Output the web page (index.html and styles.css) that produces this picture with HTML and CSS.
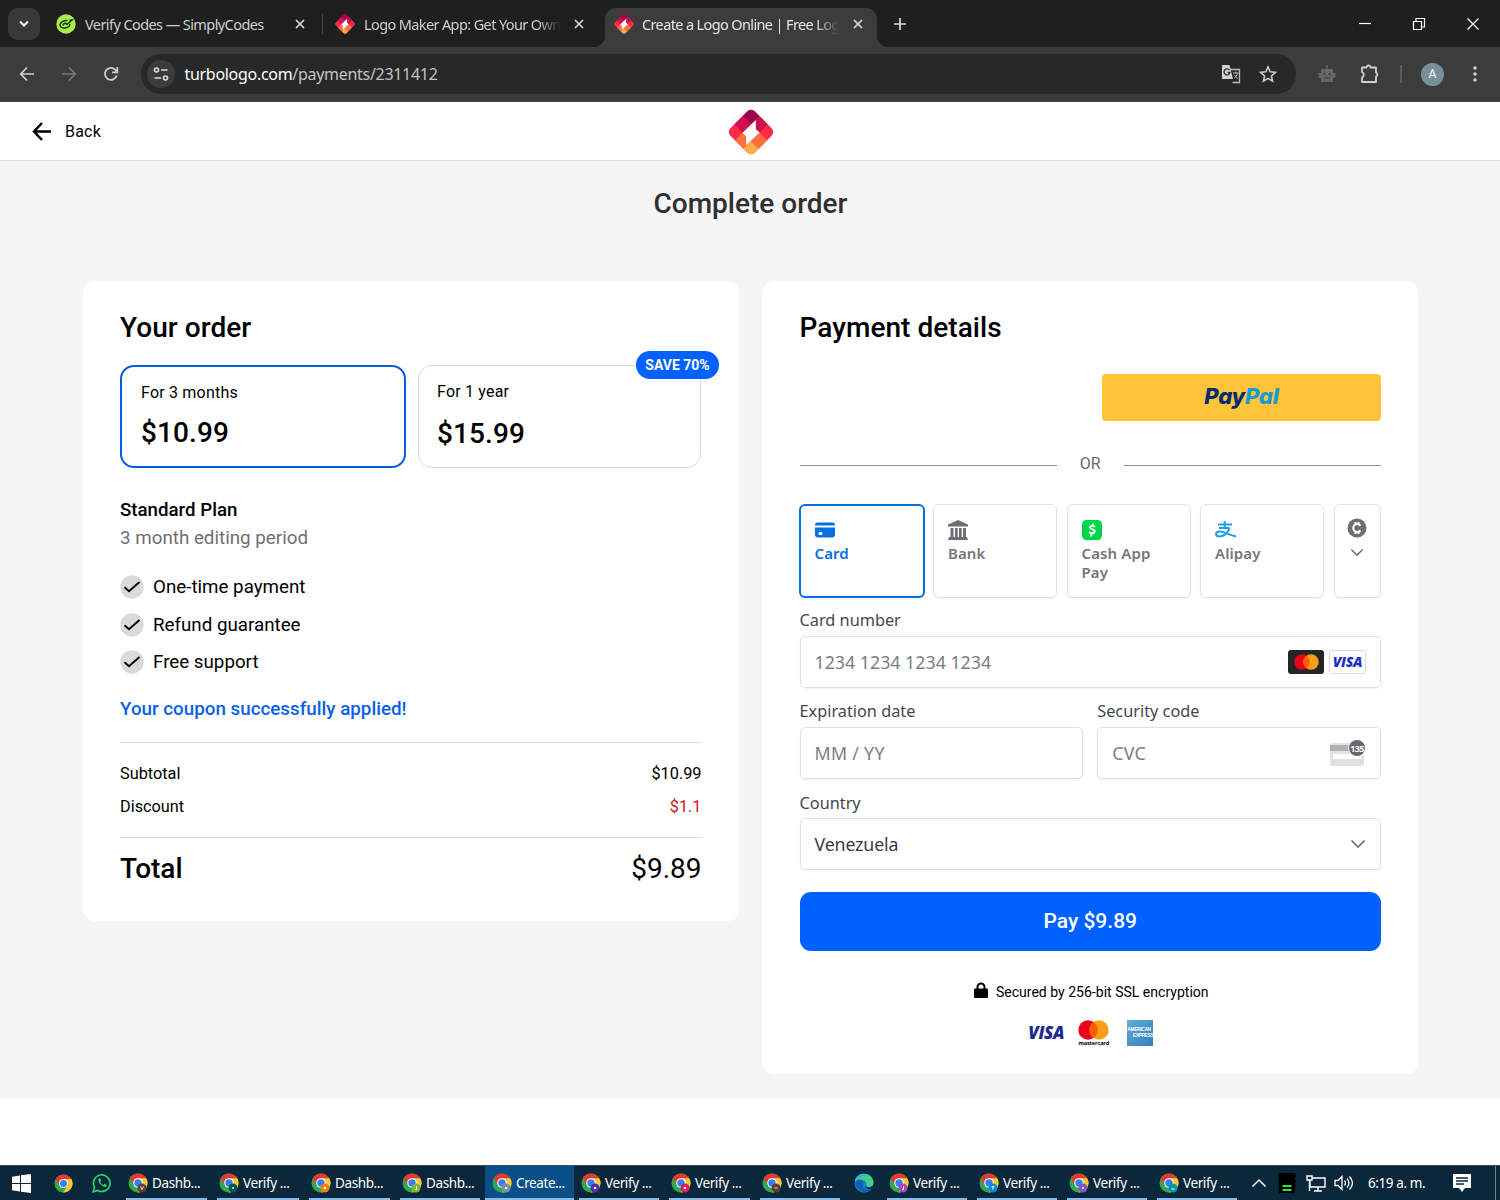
FILE: index.html
```html
<!DOCTYPE html>
<html lang="en">
<head>
  <meta charset="UTF-8">
  <meta name="viewport" content="width=device-width, initial-scale=1.0">
  <title>Create a Logo Online | Free Logo Maker</title>
  <link rel="stylesheet" href="styles.css">
</head>
<body>
  <!-- shared shapes -->
  <svg class="defs" width="0" height="0">
    <symbol id="logo" viewBox="1.700 1.700 42.600 42.600">
      <clipPath id="logoclip"><rect x="7" y="7" width="32" height="32" rx="5" transform="rotate(45 23 23)"/></clipPath>
      <g clip-path="url(#logoclip)">
        <g transform="rotate(45 23 23)">
          <rect x="6" y="6" width="34" height="34" fill="#ff2a48"/>
          <rect x="6" y="6" width="12" height="12" fill="#9c0052"/>
          <rect x="18" y="6" width="11" height="12" fill="#d0104c"/>
          <rect x="6" y="18" width="12" height="11" fill="#d0104c"/>
          <rect x="18" y="29" width="11" height="11" fill="#ff7040"/>
          <rect x="29" y="18" width="11" height="11" fill="#ff7040"/>
          <rect x="29" y="29" width="11" height="11" fill="#ffac42"/>
        </g>
      </g>
      <path d="M27.500 12v8.500l3.500 3L18.500 35.500V27L15 24z" fill="#fff"/>
    </symbol>
    <symbol id="chrome" viewBox="0 0 20 20">
      <circle cx="10" cy="10" r="9.500" fill="#2da94f"/>
      <path d="M10 10L1.800 5.200A9.500 9.500 0 0 1 18.200 5.200z" fill="#e33b2e"/>
      <path d="M10 5.200h8.200A9.500 9.500 0 0 1 9.700 19.500l4.500-7.200z" fill="#fcc934"/>
      <path d="M1.800 5.200L5.900 12.400 10 10 9 4.800z" fill="#e33b2e"/>
      <circle cx="10" cy="10" r="4.800" fill="#fff"/>
      <circle cx="10" cy="10" r="3.700" fill="#3b7ded"/>
    </symbol>
    <symbol id="close" viewBox="0 0 12 12"><path d="M2 2l8 8M10 2l-8 8" stroke="#dedede" stroke-width="1.600"/></symbol>
    <symbol id="check" viewBox="0 0 24 24">
      <circle cx="12" cy="12" r="11.700" fill="#dadada"/>
      <path d="M4.500 12.200l4.500 4L19.500 7" fill="none" stroke="#000" stroke-width="1.900"/>
    </symbol>
    <symbol id="chevron" viewBox="0 0 16 10"><path d="M1.500 1.500L8 8l6.500-6.500" fill="none" stroke="#6d6e78" stroke-width="1.700"/></symbol>
  </svg>

  <div class="tabstrip">
    <div class="tabsearch"><svg width="12" height="8"><path d="M2 1.500l4 4 4-4" fill="none" stroke="#eee" stroke-width="2"/></svg></div>
    <div class="tab first">
      <svg width="20" height="20" viewBox="0 0 20 20"><circle cx="10" cy="10" r="9.700" fill="#a5f04a"/><path d="M11.500 6.500C8 6 4 8.500 4 11s3 3.500 6 2.800 4-2.300 3.700-3.800M7 11.500c0-1.500 2-2.500 3-2l1 1L16 6l-2.500.3" fill="none" stroke="#18330c" stroke-width="1.500"/></svg>
      <span class="tabtitle t1">Verify Codes — SimplyCodes</span>
      <svg class="x" width="12" height="12"><use href="#close"/></svg>
    </div>
    <div class="tab second">
      <svg width="20" height="20"><use href="#logo"/></svg>
      <span class="tabtitle fade t2">Logo Maker App: Get Your Own</span>
      <svg class="x" width="12" height="12"><use href="#close"/></svg>
    </div>
    <div class="tab active">
      <svg width="20" height="20"><use href="#logo"/></svg>
      <span class="tabtitle fade t3">Create a Logo Online | Free Log</span>
      <svg class="x" width="12" height="12"><use href="#close"/></svg>
    </div>
    <svg class="newtab" width="14" height="14"><path d="M7 1v12M1 7h12" stroke="#ddd" stroke-width="1.700"/></svg>
    <div class="winbuttons">
      <svg width="14" height="14"><path d="M1 6.500h12" stroke="#fff" stroke-width="1.200"/></svg>
      <svg width="14" height="14"><path d="M1.500 4.500h8v8h-8zM4 4.500v-3h8.500v8.500H9.500" fill="none" stroke="#fff" stroke-width="1.200"/></svg>
      <svg width="14" height="14"><path d="M1.500 1.500l11 11M12.500 1.500l-11 11" stroke="#fff" stroke-width="1.300"/></svg>
    </div>
  </div>

  <div class="toolbar">
    <svg width="16" height="16"><path d="M15 8H2M8 1.500L1.700 8 8 14.500" fill="none" stroke="#d0d0d0" stroke-width="1.700"/></svg>
    <svg width="16" height="16"><path d="M1 8h13M8 1.500L14.300 8 8 14.500" fill="none" stroke="#777" stroke-width="1.700"/></svg>
    <svg width="16" height="16"><path d="M13.700 9.500A6 6 0 1 1 12.500 4l1.500 1.700M14.300 1v5.300H9" fill="none" stroke="#d0d0d0" stroke-width="1.800"/></svg>
    <div class="omnibox">
      <div class="siteinfo"><svg width="16" height="14"><g fill="none" stroke="#ddd" stroke-width="1.600"><circle cx="3.500" cy="3" r="2"/><path d="M8 3h6.500M1.500 11H8"/><circle cx="12.500" cy="11" r="2"/></g></svg></div>
      <span class="url"><b>turbologo.com</b>/payments/2311412</span>
      <svg class="translate" width="20" height="20"><path d="M8.500 5.500h10v13h-7" fill="none" stroke="#bbb" stroke-width="1.300"/><path d="M1 1h7.500l3.500 14H1z" fill="#d0d0d0"/><path d="M8.500 6.200A3 3 0 1 0 9 8.500H6.500" fill="none" stroke="#333" stroke-width="1.300"/><path d="M12 9h5.500M14.700 7.500V9M16.500 9c-.5 3-2 4-3 5M13.500 11l3 4" stroke="#bbb" fill="none"/></svg>
      <svg width="18" height="18"><path d="M9 1.800l2.100 5 5.400.5-4.100 3.600 1.200 5.300L9 13.400l-4.600 2.800 1.200-5.300-4.100-3.600 5.400-.5z" fill="none" stroke="#d0d0d0" stroke-width="1.500"/></svg>
    </div>
    <svg class="robot" width="20" height="20"><path d="M9.300 1h1.400v4H15q1 0 1 1v3h2.500v5H16v4H4v-4H1.500V9H4V6q0-1 1-1h4.300z" fill="#666"/><circle cx="7.500" cy="10" r="1" fill="#3c3c3c"/><circle cx="12.500" cy="10" r="1" fill="#3c3c3c"/><path d="M7 14h6" stroke="#3c3c3c"/></svg>
    <svg class="puzzle" width="20" height="20"><path d="M2 3.500h4.500a2 2 0 0 1 4 0H16v5.200a2 2 0 0 1 0 3.800V18H2v-4.500a3 3 0 0 0 0-5.500z" fill="none" stroke="#d0d0d0" stroke-width="1.800" stroke-linejoin="round"/></svg>
    <div class="vline"></div>
    <div class="avatar">A</div>
    <svg class="dots" width="4" height="18"><g fill="#d0d0d0"><circle cx="2" cy="3" r="1.800"/><circle cx="2" cy="9" r="1.800"/><circle cx="2" cy="15" r="1.800"/></g></svg>
  </div>

  <header>
    <a class="back"><svg width="20" height="20"><path d="M19 10.500H2.500M10 2L2 10.500l8 8.500" fill="none" stroke="#000" stroke-width="2.500"/></svg>Back</a>
    <svg class="brand" width="46" height="46"><use href="#logo"/></svg>
  </header>

  <main>
    <h1>Complete order</h1>
    <div class="columns">
      <section class="card order">
        <h2 class="h-order">Your order</h2>
        <div class="options">
          <div class="option selected"><p>For 3 months</p><strong>$10.99</strong></div>
          <div class="option"><p class="year">For 1 year</p><strong>$15.99</strong><span class="badge">SAVE 70%</span></div>
        </div>
        <h3>Standard Plan</h3>
        <p class="period">3 month editing period</p>
        <ul>
          <li><svg width="24" height="24"><use href="#check"/></svg>One-time payment</li>
          <li><svg width="24" height="24"><use href="#check"/></svg>Refund guarantee</li>
          <li><svg width="24" height="24"><use href="#check"/></svg>Free support</li>
        </ul>
        <p class="coupon">Your coupon successfully applied!</p>
        <div class="sums">
          <div class="row"><span>Subtotal</span><span>$10.99</span></div>
          <div class="row"><span>Discount</span><span class="red">$1.1</span></div>
        </div>
        <div class="total"><b>Total</b><span>$9.89</span></div>
      </section>

      <section class="card payment">
        <h2 class="h-pay">Payment details</h2>
        <div class="paypal"><span>Pay</span><em>Pal</em></div>
        <div class="or">OR</div>
        <div class="methods">
          <div class="method on">
            <svg width="20" height="20"><path d="M0 5.500Q0 2.500 2.500 2.500h15Q20 2.500 20 5.500z" fill="#0570de"/><path d="M0 7.500h20v7q0 3-3 3H3q-3 0-3-3z" fill="#0570de"/><rect x="3.500" y="12" width="4" height="3" rx="1.500" fill="#fff"/></svg>
            <span>Card</span>
          </div>
          <div class="method">
            <svg width="20" height="20"><path d="M10 0l10 4.500v2H0v-2zM2.500 8h3v9h-3zM7 8h2.700v9H7zM11 8h2.700v9H11zM15 8h3v9h-3zM1 17h18l1 3H0z" fill="#6d6e78"/></svg>
            <span>Bank</span>
          </div>
          <div class="method">
            <svg width="20" height="20"><rect width="20" height="20" rx="4.500" fill="#00d64b"/><path d="M13 6.800c-1.200-1.300-5-1.500-5 .8s5 1.300 4.700 3.800-4.200 2.200-5.500.6M11 3.500l-.5 2M9.500 14l-.5 2.500" fill="none" stroke="#fff" stroke-width="1.900"/></svg>
            <span>Cash App Pay</span>
          </div>
          <div class="method">
            <svg class="alipay" width="22" height="20"><path d="M3 4.500h14M4 8h10.500M9.700 1v7M14.500 8C13 13 8.500 16.500 4.500 16.500c-4.500 0-4.500-5 0-5 5 0 9 3.500 16.500 5" fill="none" stroke="#1c9fe5" stroke-width="2"/></svg>
            <span>Alipay</span>
          </div>
          <div class="method more">
            <svg width="20" height="20"><circle cx="10" cy="10" r="9.500" fill="#6d6e78"/><path d="M13.500 7.700a4 4 0 1 0 0 4.600M8.500 4v2M11.500 4v2M8.500 14v2M11.500 14v2" fill="none" stroke="#fff" stroke-width="2"/></svg>
            <svg width="14" height="9"><use href="#chevron"/></svg>
          </div>
        </div>

        <label class="l-card">Card number</label>
        <div class="input"><span class="ph-card">1234 1234 1234 1234</span>
          <div class="brands">
            <svg width="36" height="24"><rect width="36" height="24" rx="3" fill="#252525"/><circle cx="14" cy="12" r="7.700" fill="#eb001b"/><circle cx="23" cy="12" r="7.700" fill="#f79e1b"/><path d="M18.500 5.700a7.700 7.700 0 0 1 0 12.600 7.700 7.700 0 0 1 0-12.600z" fill="#ff5f00"/></svg>
            <span class="visa boxed">VISA</span>
          </div>
        </div>
        <div class="pair">
          <div><label class="l-exp">Expiration date</label><div class="input"><span class="ph-mm">MM / YY</span></div></div>
          <div><label class="l-cvc">Security code</label><div class="input"><span class="ph-cvc">CVC</span>
            <svg width="36" height="28" viewBox="0 0 36 28"><rect y="4" width="34" height="23" rx="2.500" fill="#e1e1e4"/><rect y="6" width="34" height="6" fill="#b0b0b5"/><rect x="3" y="15" width="28" height="5" fill="#fff"/><circle cx="27" cy="9" r="8.800" fill="#fff"/><circle cx="27" cy="9" r="8" fill="#66676f"/><text x="27" y="12.500" class="cvcnum">135</text></svg></div></div>
        </div>
        <label class="l-country">Country</label>
        <div class="input country"><span>Venezuela</span><svg width="16" height="10"><use href="#chevron"/></svg></div>
        <button class="pay">Pay $9.89</button>
        <div class="secured"><svg width="14" height="17"><path d="M3.500 8V5a3.500 3.500 0 0 1 7 0v3" fill="none" stroke="#000" stroke-width="2"/><rect y="6.500" width="14" height="9.500" rx="1" fill="#000"/></svg><span>Secured by 256-bit SSL encryption</span></div>
        <div class="logos">
          <span class="visa">VISA</span>
          <div class="mc"><svg width="31" height="20"><circle cx="10" cy="10" r="9.700" fill="#eb001b"/><circle cx="21" cy="10" r="9.700" fill="#f79e1b"/><path d="M15.500 2a9.700 9.700 0 0 1 0 16 9.700 9.700 0 0 1 0-16z" fill="#ff5f00"/></svg><span>mastercard</span></div>
          <div class="amex"><span>AMERICAN</span><span>EXPRESS</span></div>
        </div>
      </section>
    </div>
  </main>

  <footer class="taskbar">
    <div class="task icon"><svg width="19" height="19"><path d="M0 2.700l8-1.200v7.500H0zM9 1.300L19 0v9H9zM0 10h8v7.500l-8-1.200zM9 10h10v9L9 17.700z" fill="#fff"/></svg></div>
    <div class="task icon"><svg width="19" height="19"><use href="#chrome"/></svg></div>
    <div class="task icon"><svg width="20" height="20"><path d="M1.200 18.800l1.300-4.600a8.300 8.300 0 1 1 3.200 3.200z" fill="none" stroke="#25d366" stroke-width="1.700"/><path d="M6.500 5.500c-1.500 3 3.500 9 7.500 8.500l1-2-2.500-1.200-1.200 1.200c-1.300-.5-2.500-1.700-3-3l1-1.200-1-2.300z" fill="#25d366"/></svg></div>
    <div class="task win"><svg width="20" height="20"><use href="#chrome"/><circle cx="14" cy="15" r="4.500" fill="#5d4037"/><path d="M12.500 13.500l1.500 3 1.500-3" stroke="#ddd" fill="none"/></svg>Dashb...</div>
    <div class="task win"><svg width="20" height="20"><use href="#chrome"/><circle cx="14" cy="15" r="4.500" fill="#00594d"/><circle cx="14" cy="15" r="1" fill="#ddd"/></svg>Verify ...</div>
    <div class="task win"><svg width="20" height="20"><use href="#chrome"/><circle cx="14" cy="15" r="4.500" fill="#f57c00"/><circle cx="14" cy="15" r="1.300" fill="#fff"/></svg>Dashb...</div>
    <div class="task win"><svg width="20" height="20"><use href="#chrome"/><circle cx="14" cy="15" r="4.500" fill="#7cb342"/><path d="M14.500 13v3.500h-1.500" stroke="#fff" fill="none"/></svg>Dashb...</div>
    <div class="task win current"><svg width="20" height="20"><use href="#chrome"/><circle cx="14" cy="15" r="4.500" fill="#78909c"/><circle cx="14" cy="15" r="1.300" fill="#fff"/></svg>Create...</div>
    <div class="task win"><svg width="20" height="20"><use href="#chrome"/><circle cx="14" cy="15" r="4.500" fill="#512da8"/><circle cx="14" cy="15" r="1.300" fill="#fff"/></svg>Verify ...</div>
    <div class="task win"><svg width="20" height="20"><use href="#chrome"/><circle cx="14" cy="15" r="4.500" fill="#d81b60"/><circle cx="14" cy="15" r="1.300" fill="#fff"/></svg>Verify ...</div>
    <div class="task win"><svg width="20" height="20"><use href="#chrome"/><circle cx="14" cy="15" r="4.500" fill="#5d4037"/><path d="M12.500 15h3" stroke="#ddd"/></svg>Verify ...</div>
    <div class="task icon"><svg width="20" height="20"><circle cx="10" cy="10" r="9.500" fill="#1583d5"/><path d="M1 8C3 -1 18-2 19.500 9c.3 4-4 6-7.500 4.500 2-3-1-7-5-6.500-3 0-5 1.500-6 3z" fill="#42cf83"/><path d="M1 7C4 0 11-1 15 3 11 1 6 4 4 6z" fill="#2bb5e8"/><path d="M1 9c3-4 9-3 8 1s2 8 9 6c-7 7-17 1-17-7z" fill="#0c62b5"/><path d="M12.500 13.700c3 1.500 6 0 7-2-.5 2-1.500 3.500-2.500 4.300-2 .5-5 0-6-3z" fill="#0a273b"/></svg></div>
    <div class="task win"><svg width="20" height="20"><use href="#chrome"/><circle cx="14" cy="15" r="4.500" fill="#ab47bc"/><path d="M14.500 13v3.500h-1.500" stroke="#fff" fill="none"/></svg>Verify ...</div>
    <div class="task win"><svg width="20" height="20"><use href="#chrome"/><circle cx="14" cy="15" r="4.500" fill="#0288d1"/><path d="M12.500 13.500h3M14 13.500v3" stroke="#fff"/></svg>Verify ...</div>
    <div class="task win"><svg width="20" height="20"><use href="#chrome"/><circle cx="14" cy="15" r="4.500" fill="#7e57c2"/><circle cx="14" cy="15" r="1" fill="#fff"/></svg>Verify ...</div>
    <div class="task win"><svg width="20" height="20"><use href="#chrome"/><circle cx="14" cy="15" r="4.500" fill="#0097a7"/><path d="M12.500 16h3" stroke="#fff"/></svg>Verify ...</div>
    <div class="tray">
      <svg width="16" height="12"><path d="M1.500 9.500L8 3l6.500 6.500" fill="none" stroke="#fff" stroke-width="1.500"/></svg>
      <svg class="mem" width="18" height="20"><rect x="1" width="16" height="20" fill="#000"/><path d="M0 3h2M0 8h2M0 13h2M16 3h2M16 8h2M16 13h2" stroke="#000" stroke-width="2"/><path d="M4.500 13h9M4.500 17h9" stroke="#33e03a" stroke-width="2.200"/></svg>
      <svg class="net" width="20" height="18"><path d="M6 4h13v9H4V7M8 17h8M12 13v4M1 2h5v4H1zM3.500 6v11" fill="none" stroke="#fff" stroke-width="1.400"/></svg>
      <svg class="vol" width="20" height="18"><path d="M1 6.500h3l4-4v13l-4-4H1zM10.500 6.500q2 2.500 0 5M13 4.500q4 4.500 0 9M15.500 2.500q6 6.500 0 13" fill="none" stroke="#fff" stroke-width="1.300"/></svg>
      <span class="clock">6:19 a. m.</span>
      <svg class="note" width="20" height="20"><path d="M1 1h18v14h-6l-3 4-3-4H1z" fill="#fff"/><path d="M4 5h12M4 8h12M4 11h8" stroke="#0a273b" stroke-width="1.300"/></svg>
    </div>
  </footer>
</body>
</html>
```
FILE: styles.css
```css
* { box-sizing: border-box; }
body {
  margin: 0;
  width: 1500px;
  height: 1200px;
  overflow: hidden;
  display: flex;
  flex-direction: column;
  background: #fff;
  color: #000;
  font-family: Roboto, sans-serif;
}
h1, h2, h3, p, ul { margin: 0; padding: 0; font-weight: 500; }
svg { flex: none; display: block; }
.defs { position: absolute; }
span, b, label { white-space: nowrap; }

/* browser */
.tabstrip {
  height: 47px;
  background: #1f1f1f;
  display: flex;
  align-items: center;
  padding-left: 8px;
  font-family: "Noto Sans", sans-serif;
}
.tabsearch {
  width: 32px; height: 32px;
  border-radius: 10px;
  background: #383838;
  display: flex; align-items: center; justify-content: center;
}
.tab { display: flex; align-items: center; height: 39px; margin-top: 8px; padding-bottom: 7px; color: #d0d0d0; font-size: 14.5px; }
.tab .x { margin-left: auto; }
.tabtitle { margin-left: 9px; }
.first { width: 283px; padding-left: 16px; padding-right: 17px; }
.second { width: 282px; padding-left: 12px; padding-right: 20px; }
.second::before { content: ""; width: 1px; height: 20px; background: #4a4a4a; margin-left: -13px; margin-right: 12px; }
.active { width: 272px; background: #3c3c3c; border-radius: 11px 11px 0 0; padding-left: 9px; padding-right: 13px; color: #e6e6e6; position: relative; }
.active::before, .active::after { content: ""; position: absolute; bottom: 0; width: 12px; height: 12px; }
.active::before { left: -12px; background: radial-gradient(circle at 0 0, #1f1f1f 12px, #3c3c3c 12.5px); }
.active::after { right: -12px; background: radial-gradient(circle at 100% 0, #1f1f1f 12px, #3c3c3c 12.5px); }
.fade { width: 197px; -webkit-mask-image: linear-gradient(90deg, #000 88%, transparent); mask-image: linear-gradient(90deg, #000 88%, transparent); }
.t1 { letter-spacing: -0.58px; }
.t2 { letter-spacing: -0.62px; }
.t3 { letter-spacing: -0.63px; margin-left: 8px; }
.newtab { margin-left: 16px; }
.winbuttons { display: flex; gap: 40px; margin-left: auto; padding-right: 20px; }

.toolbar {
  height: 55px;
  background: #3c3c3c;
  border-bottom: 1px solid #4c4c4c;
  display: flex;
  align-items: center;
  padding-left: 18.5px;
}
.toolbar > svg + svg { margin-left: 26px; }
.omnibox { width: 1155px; height: 40px; margin-left: 22.5px; border-radius: 20px; background: #282828; display: flex; align-items: center; padding: 0 19px 0 6px; }
.siteinfo { width: 28px; height: 28px; border-radius: 50%; background: #3c3c3c; display: flex; align-items: center; justify-content: center; }
.url { margin-left: 9.5px; color: #c2c2c2; font: 16px "Noto Sans", sans-serif; letter-spacing: -0.3px; }
.url b { font-weight: 400; color: #fff; }
.translate { margin-left: auto; margin-right: 18px; }
.robot { margin-left: 21px; }
.toolbar > .puzzle { margin-left: 23px; }
.vline { width: 2px; height: 18px; margin-left: 20px; background: #5b5b5b; }
.avatar { width: 23px; height: 23px; margin-left: 19px; border-radius: 50%; background: #78909c; color: #fff; font-size: 12px; line-height: 23px; text-align: center; }
.dots { margin-left: 29px; }

/* page */
header { height: 59px; border-bottom: 1px solid #dcdcdc; display: grid; grid-template-columns: 727.5px 46px 1fr; align-items: center; }
.back { display: flex; align-items: center; gap: 13px; padding-left: 32px; font-size: 16px; letter-spacing: 0.2px; }
.brand { margin-top: 1px; }
main { height: 937px; background: #f5f5f5; padding-top: 22.5px; }
h1 { text-align: center; font-size: 28px; line-height: 40px; color: #2f2f2f; padding-left: 1px; }
.columns { display: grid; grid-template-columns: 656px 656px; gap: 23.5px; align-items: start; width: 1335.5px; margin: 57.5px 0 0 82.5px; }
.card { background: #fff; border-radius: 12px; padding: 29px 37px 0 37.5px; }
.order { height: 640px; }
.payment { height: 793px; }
h2 { font-size: 28px; line-height: 36px; letter-spacing: 0.05px; }

.options { display: grid; grid-template-columns: 286px 283px; gap: 12px; margin-top: 19px; }
.option { position: relative; height: 103px; border: 1px solid #d9d9d9; border-radius: 14px; padding: 15px 18px; }
.option p { font-size: 16px; line-height: 22px; font-weight: 400; letter-spacing: 0.2px; }
.option strong { display: block; margin-top: 15px; font-size: 28px; line-height: 32px; font-weight: 500; letter-spacing: 0.1px; }
.selected { border: 2px solid #0b5be0; padding-left: 19px; }
.selected strong { margin-top: 13px; }
.badge { position: absolute; top: -15px; right: -19px; width: 83px; height: 28px; border-radius: 14px; background: #0061fe; color: #fff; font-size: 14px; font-weight: 700; line-height: 28px; text-align: center; }
h3 { margin-top: 28px; font-size: 18.7px; line-height: 28px; }
.period { font-size: 18.8px; line-height: 28px; font-weight: 400; color: #6f6f6f; }
ul { list-style: none; margin-top: 16.5px; }
li { display: flex; align-items: center; gap: 9px; height: 37.5px; font-size: 18.75px; font-weight: 400; }
.coupon { margin-top: 13.5px; font-size: 18.8px; line-height: 28px; color: #0b5fe8; }
.sums { margin-top: 19px; border-top: 1px solid #d9d9d9; border-bottom: 1px solid #d9d9d9; height: 96px; padding-top: 14px; }
.row { display: flex; justify-content: space-between; font-size: 16.3px; line-height: 33px; }
.red { color: #d3101c; }
.total { display: flex; justify-content: space-between; margin-top: 11px; font-size: 28px; line-height: 40px; }
.total b { font-weight: 500; }

.paypal { width: 279px; height: 47px; margin: 28px 0 0 auto; border-radius: 4px; background: #ffc439; text-align: center; line-height: 45px; font-family: Inter, sans-serif; font-style: italic; font-weight: 800; font-size: 22px; letter-spacing: -0.25px; color: #002d70; }
.paypal em { color: #1a9bd0; }
.or { display: flex; align-items: center; gap: 23px; height: 24px; margin-top: 30px; font-size: 16px; color: #6a6a6a; }
.or::before, .or::after { content: ""; flex: 1; height: 1px; background: #8f8f8f; margin-top: 4px; }
.methods { display: grid; grid-template-columns: repeat(4, 124px) 47px; gap: 9.500px; margin-top: 29px; }
.method { height: 94px; border: 1px solid #e2e2e2; border-radius: 6px; box-shadow: 0 1px 2px rgba(0,0,0,.06); padding: 15px 0 0 14px; font: 600 15px/19px "Noto Sans", sans-serif; color: #74757c; }
.method span { display: block; white-space: normal; margin-top: 4px; width: 90px; letter-spacing: 0.1px; }
.on { border: 2px solid #0570de; color: #0570de; width: 126px; margin-left: -1px; padding: 14px; }
.more { padding: 13px 0 0; display: flex; flex-direction: column; align-items: center; gap: 10px; }

label { display: block; height: 31px; line-height: 31px; font-family: "Noto Sans", sans-serif; font-size: 16.3px; color: #45464e; }
.l-card { margin-top: 7px; padding-top: 0; }
.input { display: flex; align-items: center; justify-content: space-between; height: 52px; border: 1px solid #e0e0e0; border-radius: 5px; box-shadow: 0 1px 2px rgba(0,0,0,.05); padding: 0 14px 1px; font-family: "Noto Sans", sans-serif; font-size: 17.8px; color: #7c7d84; }
.brands { display: flex; gap: 5px; }
.visa { font: italic 800 17px/22px "Open Sans", sans-serif; color: #1a2b8c; letter-spacing: -0.3px; }
.boxed { width: 37px; height: 24px; border: 1px solid #dcdcdc; border-radius: 3px; font-size: 14px; color: #1a30c0; text-align: center; }
.pair { display: grid; grid-template-columns: 1fr 1fr; gap: 14px; margin-top: 8px; }
.cvcnum { font: 700 9px "Noto Sans", sans-serif; fill: #fff; text-anchor: middle; letter-spacing: -0.7px; }
.ph-mm, .ph-cvc { letter-spacing: 0.3px; }
.l-country { margin-top: 8px; height: 31px; line-height: 32px; }
.country { color: #3b3c45; }
.country span { letter-spacing: -0.15px; }
.pay { display: block; width: 100%; height: 59px; margin-top: 22px; padding-bottom: 3px; border: 0; border-radius: 11px; background: #0061fe; color: #fff; font: 500 21px Roboto, sans-serif; }
.secured { display: flex; align-items: center; justify-content: center; gap: 8px; margin: 31px 0 0 2px; height: 20px; font-size: 14.05px; }
.secured svg { margin-top: -3px; }
.logos { display: flex; justify-content: center; align-items: center; gap: 14px; margin: 16px 0 0 1px; height: 30px; }
.mc { width: 31px; text-align: center; font: 700 5.500px/6px "Open Sans", sans-serif; }
.mc span { display: block; letter-spacing: -0.1px; }
.amex { width: 26px; height: 26px; margin-left: 4px; padding-top: 7px; background: linear-gradient(135deg, #65acd8, #2f7fb9); color: #fff; font: 700 4.800px/6px "Liberation Sans", sans-serif; }
.amex span { display: block; letter-spacing: -0.3px; }
.amex span + span { text-align: right; }

/* windows taskbar */
.taskbar { margin-top: auto; height: 35px; background: #0a273b; border-top: 1px solid #35505c; display: grid; grid-template-columns: 43px 40px 38px 91px 92px 91px 90px 89px 90px 91px 90px 37px 90px 90px 90px 90px 1fr; color: #fff; font-family: "Noto Sans", sans-serif; font-size: 13.5px; letter-spacing: -0.4px; }
.task { display: flex; align-items: center; }
.icon { justify-content: center; }
.win { position: relative; gap: 4px; padding-left: 7px; white-space: nowrap; }
.win::after { content: ""; position: absolute; left: 5px; right: 5px; bottom: 0; height: 2px; background: #86bdea; }
.current { background: #0a4f87; }
.current::after { left: 0; right: 0; }
.tray { display: flex; align-items: center; padding-left: 9px; border-right: 1px solid #71808a; margin-right: 4px; }
.mem { margin-left: 11px; }
.net { margin-left: 10px; }
.vol { margin-left: 8px; }
.clock { margin-left: 14px; }
.note { margin-left: auto; margin-right: 23px; }
```
